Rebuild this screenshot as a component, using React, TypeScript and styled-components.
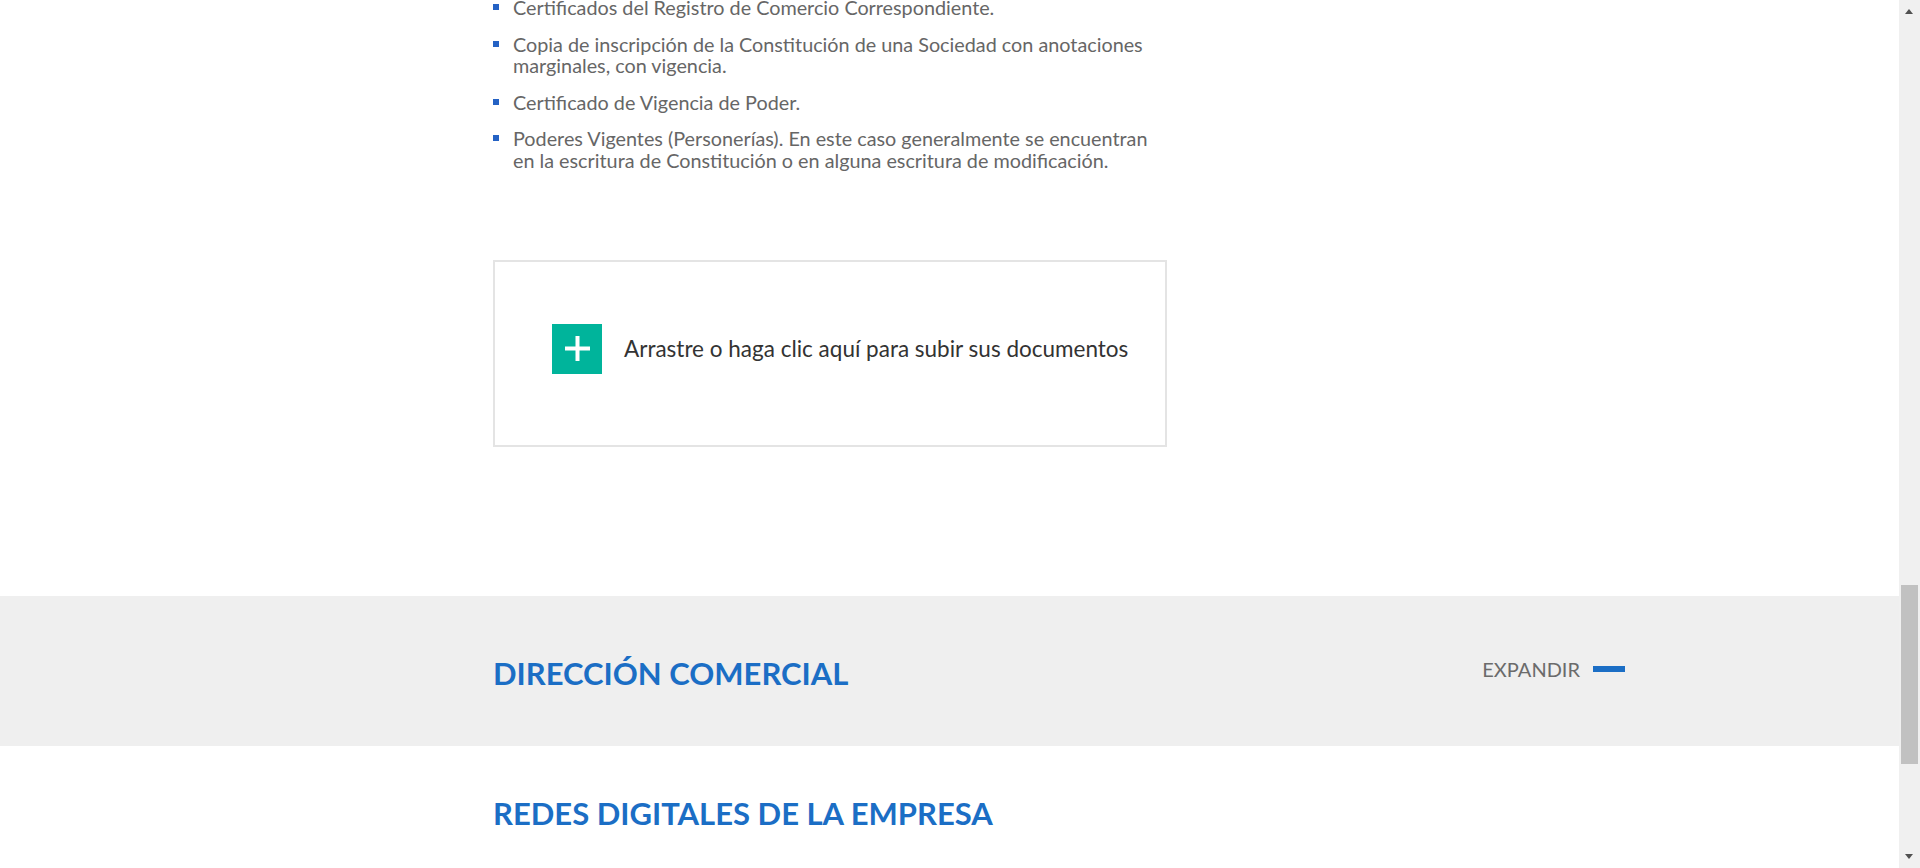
import React from "react";
import styled, { createGlobalStyle } from "styled-components";

const GlobalStyle = createGlobalStyle`
  html, body {
    margin: 0;
    padding: 0;
    background: #ffffff;
    overflow: hidden;
  }
  body {
    font-family: Lato, "Open Sans", Arial, sans-serif;
  }
  * { box-sizing: border-box; }
`;

const Page = styled.div`
  width: 1899px;
  height: 868px;
  overflow: hidden;
  display: flex;
  flex-direction: column;
`;

const Content = styled.div`
  padding-left: 493px;
  width: 100%;
`;

const Column = styled.div`
  width: 674px;
  display: flex;
  flex-direction: column;
`;

const DocList = styled.ul`
  list-style: none;
  margin: -3px 0 0 0;
  padding: 0;
`;

const DocItem = styled.li`
  position: relative;
  padding-left: 20px;
  font-size: 19.8px;
  line-height: 21.6px;
  color: #666666;
  margin-bottom: 15px;

  &::before {
    content: "";
    position: absolute;
    left: 0;
    top: 7px;
    width: 6px;
    height: 6px;
    background: #2462c4;
  }
`;

const UploadBox = styled.div`
  margin-top: 73px;
  height: 187px;
  border: 2px solid #e4e4e4;
  display: flex;
  align-items: center;
  gap: 22px;
  padding: 0 0 9px 57px;
  cursor: pointer;
`;

const PlusTile = styled.div`
  width: 50px;
  height: 50px;
  background: #00b49b;
  display: flex;
  align-items: center;
  justify-content: center;
  flex-shrink: 0;
`;

const UploadText = styled.span`
  font-size: 22.5px;
  color: #333333;
  white-space: nowrap;
`;

const GreyBand = styled.div`
  margin-top: 149px;
  background: #efefef;
  height: 150px;
  padding: 6px 274px 0 493px;
  display: flex;
  align-items: center;
  justify-content: space-between;
`;

const SectionTitle = styled.h2`
  margin: 0;
  font-size: 31px;
  line-height: 1.2;
  font-weight: 700;
  color: #1b6ec5;
`;

const Toggle = styled.button`
  border: 0;
  background: transparent;
  padding: 0;
  display: flex;
  align-items: center;
  gap: 13px;
  font-family: inherit;
  font-size: 20px;
  line-height: 1.2;
  color: #6b6b6b;
  cursor: pointer;
  margin-top: -10px;
`;

const Dash = styled.span`
  display: block;
  width: 32px;
  height: 6px;
  background: #1b6ec5;
`;

const PlainSection = styled.div`
  padding: 49px 0 0 493px;
`;

const Scrollbar = styled.div`
  position: fixed;
  top: 0;
  right: 0;
  width: 21px;
  height: 868px;
  background: #f0f0f0;
`;

const Thumb = styled.div`
  position: absolute;
  left: 2px;
  top: 585px;
  width: 17px;
  height: 179px;
  background: #c1c1c1;
`;

const Arrow = styled.div<{ $dir: "up" | "down" }>`
  position: absolute;
  left: 6px;
  width: 0;
  height: 0;
  border-left: 4.5px solid transparent;
  border-right: 4.5px solid transparent;
  ${(p) =>
    p.$dir === "up"
      ? `top: 9px; border-bottom: 5px solid #505050;`
      : `top: 854px; border-top: 5px solid #505050;`}
`;

const items = [
  "Certificados del Registro de Comercio Correspondiente.",
  "Copia de inscripción de la Constitución de una Sociedad con anotaciones marginales, con vigencia.",
  "Certificado de Vigencia de Poder.",
  "Poderes Vigentes (Personerías). En este caso generalmente se encuentran en la escritura de Constitución o en alguna escritura de modificación.",
];

function PlusIcon() {
  return (
    <svg width="25" height="25" viewBox="0 0 25 25" aria-hidden="true">
      <rect x="10.5" y="0" width="4" height="25" fill="#ffffff" />
      <rect x="0" y="10.5" width="25" height="4" fill="#ffffff" />
    </svg>
  );
}

export default function App() {
  return (
    <>
      <GlobalStyle />
      <Page>
        <Content>
          <Column>
            <DocList>
              {items.map((t) => (
                <DocItem key={t}>{t}</DocItem>
              ))}
            </DocList>
            <UploadBox>
              <PlusTile>
                <PlusIcon />
              </PlusTile>
              <UploadText>Arrastre o haga clic aquí para subir sus documentos</UploadText>
            </UploadBox>
          </Column>
        </Content>
        <GreyBand>
          <SectionTitle>DIRECCIÓN COMERCIAL</SectionTitle>
          <Toggle>
            EXPANDIR
            <Dash />
          </Toggle>
        </GreyBand>
        <PlainSection>
          <SectionTitle>REDES DIGITALES DE LA EMPRESA</SectionTitle>
        </PlainSection>
      </Page>
      <Scrollbar>
        <Arrow $dir="up" />
        <Thumb />
        <Arrow $dir="down" />
      </Scrollbar>
    </>
  );
}
